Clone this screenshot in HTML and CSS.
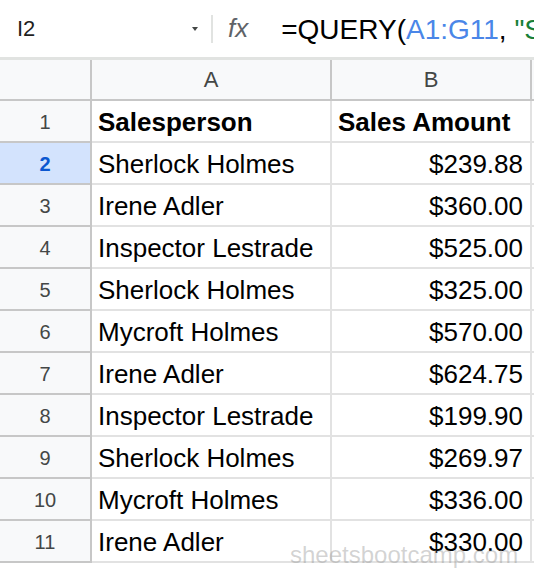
FILE: index.html
```html
<!DOCTYPE html>
<html>
<head>
<meta charset="utf-8">
<link rel="stylesheet" href="styles.css">
</head>
<body>
<div class="app">
  <div class="formula-bar">
    <div class="name-box">
      <span class="cell-ref">I2</span>
      <span class="caret"></span>
    </div>
    <div class="divider"></div>
    <span class="fx">fx</span>
    <span class="formula">=QUERY(<span class="range">A1:G11</span>, <span class="str">"S</span></span>
  </div>
  <div class="grid">
    <div class="corner hdr"></div>
    <div class="col-hdr hdr">A</div>
    <div class="col-hdr hdr">B</div>
    <div class="col-hdr hdr last"></div>

    <div class="row-hdr">1</div>
    <div class="cell bold">Salesperson</div>
    <div class="cell bold">Sales Amount</div>
    <div class="cell last"></div>

    <div class="row-hdr active">2</div>
    <div class="cell">Sherlock Holmes</div>
    <div class="cell num">$239.88</div>
    <div class="cell last"></div>

    <div class="row-hdr">3</div>
    <div class="cell">Irene Adler</div>
    <div class="cell num">$360.00</div>
    <div class="cell last"></div>

    <div class="row-hdr">4</div>
    <div class="cell">Inspector Lestrade</div>
    <div class="cell num">$525.00</div>
    <div class="cell last"></div>

    <div class="row-hdr">5</div>
    <div class="cell">Sherlock Holmes</div>
    <div class="cell num">$325.00</div>
    <div class="cell last"></div>

    <div class="row-hdr">6</div>
    <div class="cell">Mycroft Holmes</div>
    <div class="cell num">$570.00</div>
    <div class="cell last"></div>

    <div class="row-hdr">7</div>
    <div class="cell">Irene Adler</div>
    <div class="cell num">$624.75</div>
    <div class="cell last"></div>

    <div class="row-hdr">8</div>
    <div class="cell">Inspector Lestrade</div>
    <div class="cell num">$199.90</div>
    <div class="cell last"></div>

    <div class="row-hdr">9</div>
    <div class="cell">Sherlock Holmes</div>
    <div class="cell num">$269.97</div>
    <div class="cell last"></div>

    <div class="row-hdr">10</div>
    <div class="cell">Mycroft Holmes</div>
    <div class="cell num">$336.00</div>
    <div class="cell last"></div>

    <div class="row-hdr">11</div>
    <div class="cell">Irene Adler</div>
    <div class="cell num">$330.00</div>
    <div class="cell last"></div>
  </div>
  <div class="watermark">sheetsbootcamp.com</div>
</div>
</body>
</html>
```
FILE: styles.css
```css
html, body {
  margin: 0;
  padding: 0;
  background: #ffffff;
}
body {
  font-family: "Liberation Sans", Arial, sans-serif;
  width: 534px;
  height: 572px;
  overflow: hidden;
}
.app {
  position: relative;
  width: 534px;
  height: 572px;
  overflow: hidden;
}
.formula-bar {
  height: 57px;
  border-bottom: 3px solid #e1e3e1;
  display: flex;
  align-items: center;
  white-space: nowrap;
  overflow: hidden;
}
.name-box {
  width: 211px;
  display: flex;
  align-items: center;
  flex-shrink: 0;
}
.cell-ref {
  margin-left: 17px;
  font-size: 22px;
  color: #1f1f1f;
}
.caret {
  margin-left: auto;
  margin-right: 13px;
  width: 0;
  height: 0;
  border-left: 3px solid transparent;
  border-right: 3px solid transparent;
  border-top: 4px solid #444746;
}
.divider {
  width: 2px;
  height: 28px;
  background: #e1e3e1;
  flex-shrink: 0;
}
.fx {
  margin-left: 15px;
  font-size: 26px;
  font-style: italic;
  color: #5f6368;
  flex-shrink: 0;
}
.formula {
  margin-left: 33px;
  font-size: 28px;
  color: #000000;
  padding-top: 2px;
}
.range {
  color: #4a86e8;
}
.str {
  color: #188038;
}
.grid {
  display: grid;
  grid-template-columns: 92px 240px 200px 1fr;
  grid-template-rows: 41px repeat(11, 42px);
}
.hdr {
  background: #f8f9fa;
  border-right: 2px solid #c7c7c7;
  border-bottom: 2px solid #c7c7c7;
  color: #444746;
  font-size: 22px;
  display: flex;
  align-items: center;
  justify-content: center;
  padding-top: 1px;
}
.hdr.last {
  border-right: none;
}
.row-hdr {
  background: #f8f9fa;
  border-right: 2px solid #c7c7c7;
  border-bottom: 2px solid #c7c7c7;
  color: #444746;
  font-size: 20px;
  display: flex;
  align-items: center;
  justify-content: center;
  padding-top: 2px;
}
.row-hdr.active {
  background: #d3e3fd;
  color: #0b57d0;
  font-weight: bold;
}
.cell {
  border-right: 2px solid #e2e2e2;
  border-bottom: 2px solid #e2e2e2;
  font-size: 26px;
  color: #000000;
  display: flex;
  align-items: center;
  padding: 2px 7px 0 6px;
  white-space: nowrap;
  overflow: hidden;
}
.cell.bold {
  font-weight: bold;
}
.cell.num {
  justify-content: flex-end;
}
.cell.last {
  border-right: none;
  padding: 0;
}
.watermark {
  position: absolute;
  left: 290px;
  top: 541px;
  font-size: 24px;
  color: rgba(140, 140, 140, 0.38);
  white-space: nowrap;
  pointer-events: none;
}
```
